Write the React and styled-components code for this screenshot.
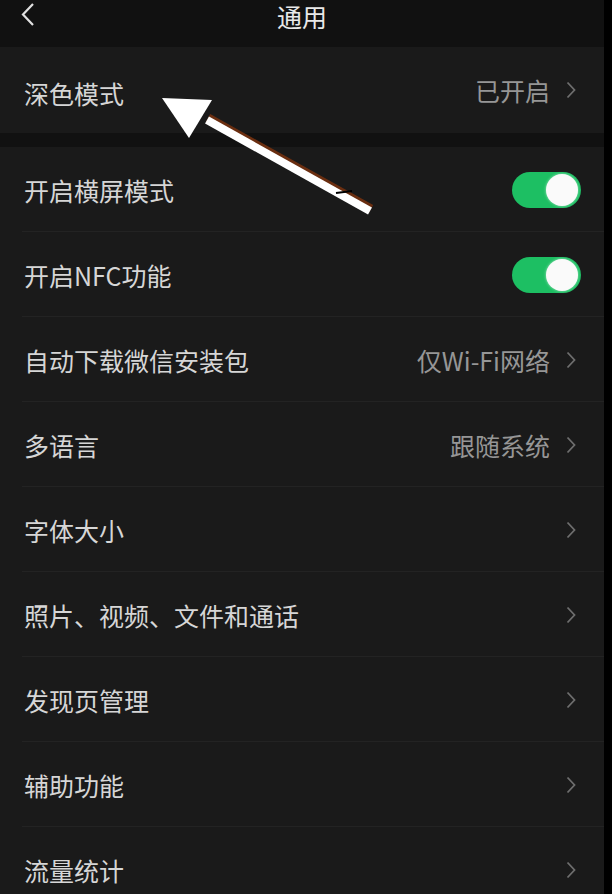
import React from "react";
import styled, { createGlobalStyle } from "styled-components";

const GlobalStyle = createGlobalStyle`
  html, body {
    margin: 0;
    padding: 0;
    background: #000;
  }
  body {
    font-family: "Noto Sans CJK SC", "Noto Sans", sans-serif;
    -webkit-font-smoothing: antialiased;
  }
`;

const Screen = styled.div`
  position: relative;
  width: 604px;
  height: 894px;
  overflow: hidden;
  background: #111111;
`;

const TopBar = styled.div`
  height: 47px;
  box-sizing: border-box;
  padding-top: 2px;
  display: flex;
  justify-content: center;
  align-items: flex-start;
  position: relative;
  color: #e8e8e8;
  font-size: 25px;
  line-height: 28px;
`;

const BackButton = styled.div`
  position: absolute;
  left: 20px;
  top: 2px;
  width: 16px;
  height: 24px;
  display: flex;
`;

const Group = styled.div`
  background: #1a1a1a;
  margin-bottom: ${(p) => p.$gap || 0}px;
`;

const Row = styled.div`
  height: ${(p) => p.$h || 85}px;
  display: flex;
  align-items: center;
  padding: 0 28px 0 24px;
  position: relative;
  box-sizing: border-box;
  &:not(:last-child)::after {
    content: "";
    position: absolute;
    left: 22px;
    right: 0;
    bottom: 0;
    height: 1px;
    background: #232323;
  }
`;

const Label = styled.span`
  flex: 1;
  color: #d6d6d6;
  font-size: 25px;
  line-height: 30px;
  padding-top: ${(p) => p.$shift || 0}px;
`;

const Value = styled.span`
  color: #969696;
  font-size: 25px;
  line-height: 30px;
  margin-right: 16px;
`;

const Chevron = styled.svg`
  width: 10px;
  height: 18px;
  flex: none;
`;

const Toggle = styled.div`
  width: 69px;
  height: 36px;
  border-radius: 18px;
  background: #1dbf63;
  position: relative;
  margin-right: -5px;
  flex: none;
  &::after {
    content: "";
    position: absolute;
    right: 3px;
    top: 2px;
    width: 32px;
    height: 32px;
    border-radius: 50%;
    background: #fafafa;
    box-shadow: 0 0 3px rgba(255, 255, 255, 0.6);
  }
`;

const Annotation = styled.svg`
  position: absolute;
  left: 0;
  top: 0;
  width: 604px;
  height: 300px;
  pointer-events: none;
`;

const Arrow = () => (
  <Chevron viewBox="0 0 10 18">
    <path d="M1.5 1.5 L8.5 9 L1.5 16.5" fill="none" stroke="#6e6e6e" strokeWidth="1.8" />
  </Chevron>
);

const items = [
  { label: "开启横屏模式", toggle: true },
  { label: "开启NFC功能", toggle: true },
  { label: "自动下载微信安装包", value: "仅Wi-Fi网络" },
  { label: "多语言", value: "跟随系统" },
  { label: "字体大小" },
  { label: "照片、视频、文件和通话" },
  { label: "发现页管理" },
  { label: "辅助功能" },
  { label: "流量统计" },
];

export default function App() {
  return (
    <>
      <GlobalStyle />
      <Screen>
        <TopBar>
          <BackButton>
            <svg width="16" height="24" viewBox="0 0 16 24">
              <path d="M13 2 L3 12.5 L13 23" fill="none" stroke="#e0e0e0" strokeWidth="2.2" />
            </svg>
          </BackButton>
          通用
        </TopBar>
        <Group $gap={14}>
          <Row $h={86}>
            <Label $shift={6}>深色模式</Label>
            <Value>已开启</Value>
            <Arrow />
          </Row>
        </Group>
        <Group>
          {items.map((it) => (
            <Row key={it.label}>
              <Label>{it.label}</Label>
              {it.value && <Value>{it.value}</Value>}
              {it.toggle ? <Toggle /> : <Arrow />}
            </Row>
          ))}
        </Group>
        <Annotation viewBox="0 0 604 300">
          <path d="M208 118 L371 209" stroke="#6a2e10" strokeWidth="9" />
          <path d="M207 120 L370 211" stroke="#ffffff" strokeWidth="8" />
          <polygon points="162,98 212,100 189,138" fill="#ffffff" />
          <path d="M336 193 L352 191" stroke="#000" strokeWidth="2" />
        </Annotation>
      </Screen>
    </>
  );
}
